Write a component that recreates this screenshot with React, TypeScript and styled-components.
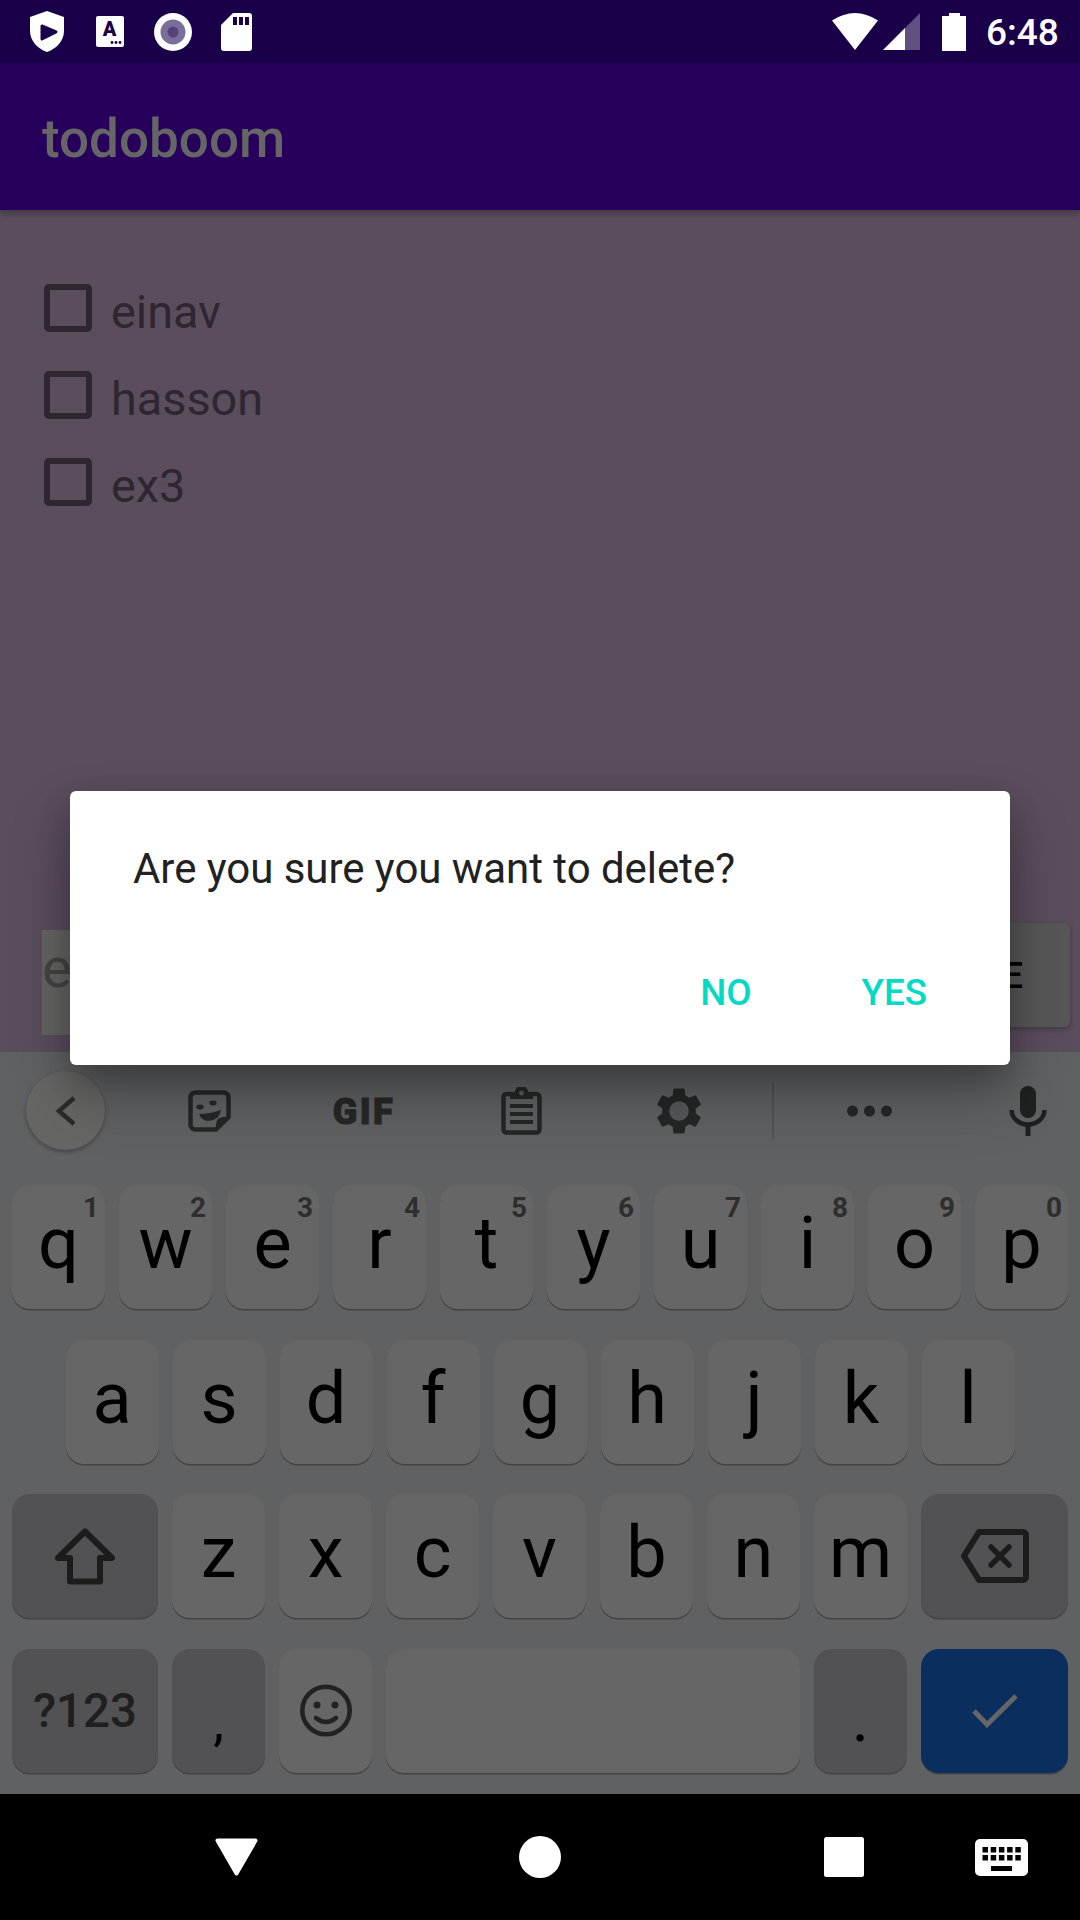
import React from "react";
import styled, { createGlobalStyle } from "styled-components";

const Global = createGlobalStyle`
  html, body { margin: 0; padding: 0; background: #000; }
  * { box-sizing: border-box; }
`;

const Screen = styled.div`
  position: relative;
  width: 1080px;
  height: 1920px;
  overflow: hidden;
  display: flex;
  flex-direction: column;
  font-family: Roboto, "Liberation Sans", sans-serif;
`;

const StatusBar = styled.div`
  height: 63px;
  flex: none;
  display: flex;
  align-items: center;
  padding: 0 24px 0 15.5px;
  background: #190049;
  position: relative;
  z-index: 2;
`;
const StatusSlot = styled.div`
  width: 63px;
  display: flex;
  justify-content: center;
  align-items: center;
`;
const StatusRight = styled.div`
  margin-left: auto;
  display: flex;
  align-items: center;
`;
const StatusGlyph = styled.svg<{ $mr?: number }>`
  display: block;
  margin-right: ${(p) => p.$mr ?? 0}px;
`;
const Clock = styled.span`
  font-size: 37px;
  font-weight: 500;
  color: #fff;
  padding-top: 3px;
  line-height: 60px;
  width: 70px;
  white-space: nowrap;
`;

const AppBar = styled.header`
  height: 147px;
  flex: none;
  display: flex;
  align-items: center;
  padding: 5px 0 0 42px;
  background: #27005c;
  box-shadow: 0 3px 8px rgba(0, 0, 0, 0.3);
  position: relative;
  z-index: 1;
`;
const Title = styled.h1`
  margin: 0;
  font-size: 53px;
  font-weight: 500;
  color: #666;
`;

const Content = styled.main`
  flex: 1;
  min-height: 0;
  background: #5a4d5c;
  display: flex;
  flex-direction: column;
`;
const List = styled.ul`
  list-style: none;
  margin: 0;
  padding: 54.5px 0 0 44px;
`;
const Row = styled.li`
  height: 87px;
  display: flex;
  align-items: center;
  gap: 19px;
`;
const Box = styled.span`
  width: 48px;
  height: 48px;
  border: 6px solid #2e2630;
  border-radius: 5px;
  flex: none;
`;
const RowLabel = styled.span`
  font-size: 46.8px;
  color: #2e2630;
  padding-top: 7px;
`;
const Form = styled.div`
  margin-top: auto;
  padding: 0 10px 17px 42px;
  display: flex;
  align-items: flex-end;
`;
const Field = styled.div`
  flex: 1;
  height: 105px;
  background: #646462;
  font-size: 56px;
  line-height: 76px;
  color: #444;
`;
const AddButton = styled.div`
  height: 104px;
  margin-bottom: 8px;
  padding: 0 47px 0 60px;
  display: flex;
  align-items: center;
  background: #575757;
  border-radius: 6px;
  box-shadow: 0 2px 5px rgba(0, 0, 0, 0.25);
  font-size: 36.75px;
  font-weight: 500;
  color: #000;
`;

const Dialog = styled.div`
  position: absolute;
  left: 70px;
  top: 791px;
  width: 940px;
  height: 274px;
  background: #fff;
  border-radius: 6px;
  box-shadow: 0 32px 60px rgba(0, 0, 0, 0.25), 0 12px 30px rgba(0, 0, 0, 0.2);
  display: flex;
  flex-direction: column;
  z-index: 3;
`;
const DialogText = styled.p`
  margin: 0;
  padding: 50px 0 0 63px;
  font-size: 42px;
  letter-spacing: -0.04px;
  line-height: 56px;
  color: #212121;
`;
const DialogActions = styled.div`
  margin-top: auto;
  padding: 0 83px 54px 0;
  display: flex;
  justify-content: flex-end;
  gap: 110px;
`;
const DialogAction = styled.span`
  font-size: 36.75px;
  line-height: 37px;
  font-weight: 500;
  color: #03dac5;
`;

const Keyboard = styled.section`
  height: 742px;
  flex: none;
  background: #5f6163;
  display: flex;
  flex-direction: column;
`;
const Toolbar = styled.div`
  height: 133px;
  flex: none;
  padding-bottom: 16px;
  display: grid;
  grid-template-columns: 131px 157px 152px 162px 154px 34px 158px 132px;
  align-items: center;
  justify-items: center;
`;
const ToolSlot = styled.div<{ $pl?: number }>`
  width: 100%;
  display: flex;
  justify-content: center;
  align-items: center;
  padding-left: ${(p) => p.$pl ?? 0}px;
`;
const BackBubble = styled.div`
  width: 79px;
  height: 79px;
  border-radius: 50%;
  background: #666664;
  box-shadow: 0 2px 4px rgba(0, 0, 0, 0.3);
  display: flex;
  align-items: center;
  justify-content: center;
`;
const GifLabel = styled.span`
  font-family: Roboto, sans-serif;
  font-size: 36px;
  font-weight: 900;
  letter-spacing: 2.5px;
  -webkit-text-stroke: 1px #262828;
  color: #262828;
  line-height: 30px;
  padding-top: 2px;
`;
const ToolDivider = styled.div`
  width: 2px;
  height: 56px;
  background: #525456;
`;
const KeyRows = styled.div`
  display: flex;
  flex-direction: column;
  gap: 30.5px;
  padding: 0 12px;
`;
const KeyRow = styled.div`
  display: flex;
  justify-content: center;
  gap: 14px;
`;
const Key = styled.div<{ $w?: number; $tone?: "light" | "dark" | "accent" }>`
  position: relative;
  width: ${(p) => p.$w ?? 93}px;
  height: 124px;
  flex: none;
  border-radius: 18px;
  display: flex;
  align-items: center;
  justify-content: center;
  color: #000;
  background: ${(p) =>
    p.$tone === "dark" ? "#525254" : p.$tone === "accent" ? "#0a2e5e" : "#666666"};
  box-shadow: 0 1.5px 0 #434345;
`;
const Letter = styled.span`
  font-size: 72px;
  line-height: 72px;
  padding-bottom: 6px;
`;
const Hint = styled.span`
  position: absolute;
  top: 7px;
  right: 6px;
  font-size: 28px;
  line-height: 32px;
  font-weight: 700;
  color: #2e2e2e;
`;
const SymbolLabel = styled.span`
  font-size: 47.5px;
  font-weight: 500;
  color: #1f1f1f;
`;
const Mark = styled.span<{ $size: number; $drop: number }>`
  font-size: ${(p) => p.$size}px;
  line-height: ${(p) => p.$size}px;
  padding-top: ${(p) => p.$drop}px;
`;

const NavBar = styled.nav`
  height: 126px;
  flex: none;
  background: #000;
  display: flex;
  align-items: center;
`;
const NavGlyph = styled.svg<{ $ml: number }>`
  display: block;
  margin-left: ${(p) => p.$ml}px;
`;

const DARK = "#190049";
const ICON = "#252727";

function Shield() {
  return (
    <svg width="34" height="41" viewBox="0 0 34 41">
      <path d="M17 0 L34 6 V20 C34 30 26 38 17 41 C8 38 0 30 0 20 V6 Z" fill="#fff" />
      <path d="M12 15 L26 21 L12 28 Z" fill={DARK} stroke={DARK} strokeWidth="3" strokeLinejoin="round" />
    </svg>
  );
}

function AccessIcon() {
  return (
    <svg width="28" height="31" viewBox="0 0 28 31">
      <rect width="28" height="31" rx="2" fill="#fff" />
      <text x="13.5" y="20" fontFamily="Roboto, sans-serif" fontSize="20" fontWeight="900" textAnchor="middle" fill={DARK}>
        A
      </text>
      <circle cx="16" cy="26.5" r="1.4" fill={DARK} />
      <circle cx="20" cy="26.5" r="1.4" fill={DARK} />
      <circle cx="24" cy="26.5" r="1.4" fill={DARK} />
    </svg>
  );
}

function RecordIcon() {
  return (
    <svg width="38" height="38" viewBox="0 0 38 38">
      <circle cx="19" cy="19" r="19" fill="#fff" />
      <circle cx="19" cy="19" r="12.5" fill="#7a6e9a" />
      <circle cx="19" cy="19" r="5.5" fill="#54437e" />
    </svg>
  );
}

function SdIcon() {
  return (
    <svg width="31" height="38" viewBox="0 0 31 38">
      <path d="M12 0 H28 A3 3 0 0 1 31 3 V35 A3 3 0 0 1 28 38 H3 A3 3 0 0 1 0 35 V12 Z" fill="#fff" />
      <rect x="12" y="4" width="4" height="8" fill={DARK} />
      <rect x="18" y="4" width="4" height="8" fill={DARK} />
      <rect x="24" y="4" width="4" height="8" fill={DARK} />
    </svg>
  );
}

function StickerIcon() {
  return (
    <svg width="43" height="42" viewBox="0 0 43 42">
      <path d="M8 2.5 H35 A5 5 0 0 1 40.5 8 V27 L28 39.5 H8 A5 5 0 0 1 2.5 34 V8 A5 5 0 0 1 8 2.5 Z" fill="none" stroke={ICON} strokeWidth="4.5" />
      <path d="M28 39 V34 A7 7 0 0 1 35 27 H40 Z" fill={ICON} />
      <ellipse cx="12" cy="17" rx="3.6" ry="2.4" fill={ICON} />
      <ellipse cx="25" cy="13" rx="3.6" ry="2.4" fill={ICON} />
      <path d="M11 24 Q22 24 33 20 Q31 31 20 31 Q14 31 11 24 Z" fill={ICON} />
    </svg>
  );
}

function ClipboardIcon() {
  return (
    <svg width="41" height="48" viewBox="0 0 41 48">
      <rect x="2.5" y="7" width="36" height="38.5" rx="3" fill="none" stroke={ICON} strokeWidth="4.5" />
      <path d="M9 5 H14 A6.5 6.5 0 0 1 27 5 H32 V12 H9 Z" fill={ICON} />
      <circle cx="20.5" cy="6" r="2.4" fill="#5a5c5d" />
      <path d="M9 19 H32 M9 27 H32 M9 35 H32" stroke={ICON} strokeWidth="3.8" />
    </svg>
  );
}

function DotsIcon() {
  return (
    <svg width="45" height="12" viewBox="0 0 45 12">
      <circle cx="5.5" cy="6" r="5.5" fill={ICON} />
      <circle cx="22.5" cy="6" r="5.5" fill={ICON} />
      <circle cx="39.5" cy="6" r="5.5" fill={ICON} />
    </svg>
  );
}

function MicIcon() {
  return (
    <svg width="38" height="50" viewBox="0 0 38 50">
      <rect x="11" y="0" width="16" height="32" rx="8" fill="#1f2020" />
      <path d="M2.5 24 A16.5 14.5 0 0 0 35.5 24" fill="none" stroke="#1f2020" strokeWidth="4.5" />
      <rect x="16.5" y="38" width="5" height="12" fill="#1f2020" />
    </svg>
  );
}

const row1 = ["q", "w", "e", "r", "t", "y", "u", "i", "o", "p"];
const row2 = ["a", "s", "d", "f", "g", "h", "j", "k", "l"];
const row3 = ["z", "x", "c", "v", "b", "n", "m"];

export default function App() {
  return (
    <Screen>
      <Global />
      <StatusBar>
        <StatusSlot><Shield /></StatusSlot>
        <StatusSlot><AccessIcon /></StatusSlot>
        <StatusSlot><RecordIcon /></StatusSlot>
        <StatusSlot><SdIcon /></StatusSlot>
        <StatusRight>
          <StatusGlyph $mr={5} width="46" height="37" viewBox="0 0 46 37">
            <path d="M0 7.5 Q23 -7.5 46 7.5 L23 37 Z" fill="#fff" />
          </StatusGlyph>
          <StatusGlyph $mr={22} width="37" height="37" viewBox="0 0 37 37">
            <path d="M0 37 L22 15 V37 Z" fill="#fff" />
            <path d="M22 15 L37 0 V37 H22 Z" fill="#5f5080" />
          </StatusGlyph>
          <StatusGlyph $mr={20} width="24" height="38" viewBox="0 0 24 38">
            <path d="M7 0 H18 V3 H24 V38 H0 V3 H7 Z" fill="#fff" />
          </StatusGlyph>
          <Clock>6:48</Clock>
        </StatusRight>
      </StatusBar>

      <AppBar>
        <Title>todoboom</Title>
      </AppBar>

      <Content>
        <List>
          {["einav", "hasson", "ex3"].map((t) => (
            <Row key={t}>
              <Box />
              <RowLabel>{t}</RowLabel>
            </Row>
          ))}
        </List>
        <Form>
          <Field>e</Field>
          <AddButton>E</AddButton>
        </Form>
      </Content>

      <Keyboard>
        <Toolbar>
          <ToolSlot>
            <BackBubble>
              <svg width="22" height="32" viewBox="0 0 22 32">
                <path d="M19 3 L4 16 L19 29" fill="none" stroke="#2b2b2b" strokeWidth="4.5" />
              </svg>
            </BackBubble>
          </ToolSlot>
          <ToolSlot><StickerIcon /></ToolSlot>
          <ToolSlot><GifLabel>GIF</GifLabel></ToolSlot>
          <ToolSlot><ClipboardIcon /></ToolSlot>
          <ToolSlot>
            <svg width="56" height="56" viewBox="0 0 24 24">
              <path
                fill={ICON}
                d="M19.14 12.94c.04-.3.06-.61.06-.94 0-.32-.02-.64-.07-.94l2.03-1.58a.49.49 0 0 0 .12-.61l-1.92-3.32a.488.488 0 0 0-.59-.22l-2.39.96c-.5-.38-1.03-.7-1.62-.94l-.36-2.54a.484.484 0 0 0-.48-.41h-3.84c-.24 0-.43.17-.47.41l-.36 2.54c-.59.24-1.13.57-1.62.94l-2.39-.96c-.22-.08-.47 0-.59.22L2.74 8.87c-.12.21-.08.47.12.61l2.03 1.58c-.05.3-.09.63-.09.94s.02.64.07.94l-2.03 1.58a.49.49 0 0 0-.12.61l1.92 3.32c.12.22.37.29.59.22l2.39-.96c.5.38 1.03.7 1.62.94l.36 2.54c.05.24.24.41.48.41h3.84c.24 0 .44-.17.47-.41l.36-2.54c.59-.24 1.13-.56 1.62-.94l2.39.96c.22.08.47 0 .59-.22l1.92-3.32c.12-.22.07-.47-.12-.61l-2.01-1.58zM12 15.6c-1.98 0-3.6-1.62-3.6-3.6s1.62-3.6 3.6-3.6 3.6 1.62 3.6 3.6-1.62 3.6-3.6 3.6z"
              />
              <circle cx="12" cy="12" r="4.2" fill="#56585a" />
            </svg>
          </ToolSlot>
          <ToolDivider />
          <ToolSlot><DotsIcon /></ToolSlot>
          <ToolSlot $pl={28}><MicIcon /></ToolSlot>
        </Toolbar>

        <KeyRows>
          <KeyRow>
            {row1.map((k, i) => (
              <Key key={k}>
                <Letter>{k}</Letter>
                <Hint>{(i + 1) % 10}</Hint>
              </Key>
            ))}
          </KeyRow>
          <KeyRow>
            {row2.map((k) => (
              <Key key={k}><Letter>{k}</Letter></Key>
            ))}
          </KeyRow>
          <KeyRow>
            <Key $w={146} $tone="dark">
              <svg width="60" height="57" viewBox="0 0 60 57">
                <path d="M30 3.5 L57 30 H45 V53.5 H15 V30 H3 Z" fill="none" stroke="#1c1c1c" strokeWidth="6" strokeLinejoin="round" />
              </svg>
            </Key>
            {row3.map((k) => (
              <Key key={k}><Letter>{k}</Letter></Key>
            ))}
            <Key $w={147} $tone="dark">
              <svg width="68" height="54" viewBox="0 0 68 54">
                <path d="M18 3 H62 A3 3 0 0 1 65 6 V48 A3 3 0 0 1 62 51 H18 L3 27 Z" fill="none" stroke="#1c1c1c" strokeWidth="6" strokeLinejoin="round" />
                <path d="M30 18 L48 36 M48 18 L30 36" stroke="#1c1c1c" strokeWidth="5.5" strokeLinecap="round" />
              </svg>
            </Key>
          </KeyRow>
          <KeyRow>
            <Key $w={146} $tone="dark"><SymbolLabel>?123</SymbolLabel></Key>
            <Key $tone="dark"><Mark $size={54} $drop={23}>,</Mark></Key>
            <Key>
              <svg width="52" height="53" viewBox="0 0 52 53">
                <circle cx="26" cy="26.5" r="23.7" fill="none" stroke="#222" strokeWidth="4.6" />
                <circle cx="17" cy="21" r="3.5" fill="#222" />
                <circle cx="35" cy="21" r="3.5" fill="#222" />
                <path d="M16 34 Q26 42 36 34" fill="none" stroke="#222" strokeWidth="4.5" strokeLinecap="round" />
              </svg>
            </Key>
            <Key $w={414} />
            <Key $tone="dark"><Mark $size={66} $drop={17}>.</Mark></Key>
            <Key $w={147} $tone="accent">
              <svg width="46" height="34" viewBox="0 0 46 34">
                <path d="M2 17 L15 30.5 L44 2" fill="none" stroke="#666" strokeWidth="5" />
              </svg>
            </Key>
          </KeyRow>
        </KeyRows>
      </Keyboard>

      <NavBar>
        <NavGlyph $ml={215} width="43" height="38" viewBox="0 0 43 38">
          <path d="M2.5 2.5 H40.5 L21.5 35.5 Z" fill="#fff" stroke="#fff" strokeWidth="4" strokeLinejoin="round" />
        </NavGlyph>
        <NavGlyph $ml={261} width="42" height="42" viewBox="0 0 42 42">
          <circle cx="21" cy="21" r="21" fill="#fff" />
        </NavGlyph>
        <NavGlyph $ml={263} width="40" height="40" viewBox="0 0 40 40">
          <rect width="40" height="40" rx="2.5" fill="#fff" />
        </NavGlyph>
        <NavGlyph $ml={111} width="53" height="37" viewBox="0 0 53 37">
          <rect width="53" height="37" rx="5" fill="#fff" />
          {[0, 1, 2, 3, 4].map((c) =>
            [0, 1].map((r) => (
              <rect key={`${c}-${r}`} x={7.5 + c * 8.2} y={8 + r * 8} width="5.5" height="5.5" fill="#000" />
            ))
          )}
          <rect x="16" y="27" width="21" height="5" fill="#000" />
        </NavGlyph>
      </NavBar>

      <Dialog>
        <DialogText>Are you sure you want to delete?</DialogText>
        <DialogActions>
          <DialogAction>NO</DialogAction>
          <DialogAction>YES</DialogAction>
        </DialogActions>
      </Dialog>
    </Screen>
  );
}
